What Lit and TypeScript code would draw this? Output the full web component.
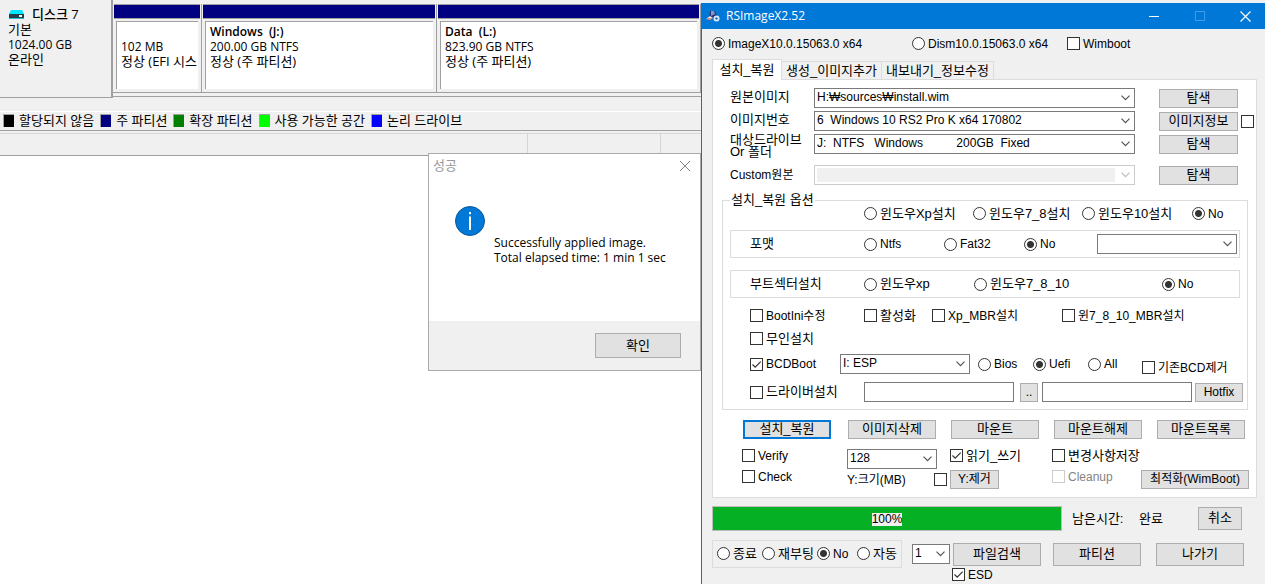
import { LitElement, html, css, nothing } from "lit";
import { customElement } from "lit/decorators.js";

const hasHangul = (text: string) => /[\uac00-\ud7a3]/.test(text);

const controls = css`
  * { box-sizing: border-box; }
  button, input, select { font: inherit; color: inherit; margin: 0; border-radius: 0; }
  .ko { font-size: 13px; }
  button {
    height: 19px;
    padding: 0 2px 1px;
    border: 1px solid #adadad;
    background: #e1e1e1;
    line-height: 14px;
    white-space: nowrap;
    overflow: hidden;
  }
  .tick { display: flex; align-items: center; gap: 3px; height: 13px; line-height: 16px; white-space: nowrap; }
  .tick.off { color: #838383; }
  input[type="radio"], input[type="checkbox"] {
    appearance: none;
    flex: none;
    width: 13px;
    height: 13px;
    border: 1px solid #333;
    background: #fff;
  }
  input[type="radio"] { border-radius: 50%; }
  input[type="radio"]:checked { background: radial-gradient(circle, #333 3px, #fff 4px); }
  input[type="checkbox"]:checked {
    background: #fff url("data:image/svg+xml,%3Csvg xmlns='http://www.w3.org/2000/svg' viewBox='0 0 11 11'%3E%3Cpath d='M1.5 5.5 4.2 8.2 9.7 2.7' fill='none' stroke='%23333' stroke-width='1.2'/%3E%3C/svg%3E");
  }
  input[type="checkbox"]:disabled { border-color: #ccc; }
  input[type="text"] { width: 150px; height: 20px; border: 1px solid #7a7a7a; background: #fff; padding: 0 2px; }
  select {
    appearance: none;
    width: 100%;
    height: 20px;
    padding: 0 18px 2px 2px;
    border: 1px solid #7a7a7a;
    background: #fff url("data:image/svg+xml,%3Csvg xmlns='http://www.w3.org/2000/svg' viewBox='0 0 9 6'%3E%3Cpath d='M.5 .7 4.5 4.7 8.5 .7' fill='none' stroke='%23555' stroke-width='1.2'/%3E%3C/svg%3E") no-repeat right 4px center / 9px 6px;
    white-space: pre;
  }
  select:disabled {
    opacity: 1;
    border-color: #ccc;
    box-shadow: inset 0 0 0 2px #fff;
    background:
      url("data:image/svg+xml,%3Csvg xmlns='http://www.w3.org/2000/svg' viewBox='0 0 9 6'%3E%3Cpath d='M.5 .7 4.5 4.7 8.5 .7' fill='none' stroke='%23bbb' stroke-width='1.2'/%3E%3C/svg%3E") no-repeat right 4px center / 9px 6px,
      linear-gradient(#fff, #fff) no-repeat right / 19px 100%,
      #f0f0f0;
  }
`;

@customElement("disk-view")
class DiskView extends LitElement {
  static styles = css`
    :host { display: block; min-width: 0; background: #fff; font: 12px/15px "Open Sans", "Noto Sans CJK KR", sans-serif; color: #000; }
    * { box-sizing: border-box; }
    .ko { font-size: 13px; }
    .disks { display: grid; grid-template-columns: 113px 1fr; height: 98px; background: #f0f0f0; }
    .disk { padding: 7px 8px; border-right: 2px solid #a0a0a0; border-bottom: 1px solid #a0a0a0; }
    .disk div, .part div { height: 15px; white-space: pre; }
    .disk .name { display: flex; align-items: center; gap: 8px; font-weight: 500; }
    .disk svg { width: 15px; height: 9px; margin-left: 1px; }
    .disks .parts { display: grid; grid-template-columns: 89px 235px 1fr; margin-top: 4px; height: 93px; border-bottom: 1px solid #a0a0a0; }
    .parts .part { display: flex; flex-direction: column; height: 89px; border-right: 1px solid #a0a0a0; border-bottom: 1px solid #a0a0a0; }
    .band { flex: none; height: 15px; margin: 0 1px; background: #000080; border: solid #a0a0a0; border-width: 1px 0; }
    .cell { flex: 1; margin: 2px 3px 3px; padding: 2px 4px; background: #fff; border: solid #a0a0a0; border-width: 1px 0 0 1px; overflow: hidden; }
    .part .title { font-weight: 600; }
    .legend { display: flex; align-items: center; gap: 6px; height: 20px; margin-top: 13px; padding: 0 3px 1px; border-top: 1px solid #fff; border-bottom: 1px solid #a0a0a0; }
    .key { display: flex; align-items: center; gap: 5px; white-space: nowrap; }
    .swatch { width: 11px; height: 13px; border: solid #a0a0a0; border-width: 1px 0 0 1px; }
    .lower { background: #f0f0f0; overflow: hidden; }
    .head { display: grid; grid-template-columns: 1fr 133px 40px; height: 23px; margin-top: 2px; border-top: 1px solid #d5d5d5; border-bottom: 1px solid #a0a0a0; }
    .head span { border-right: 1px solid #d5d5d5; }
    .head span:last-child { border: 0; }
  `;

  private parts = [
    ["", "102 MB", "정상 (EFI 시스"],
    ["Windows  (J:)", "200.00 GB NTFS", "정상 (주 파티션)"],
    ["Data  (L:)", "823.90 GB NTFS", "정상 (주 파티션)"],
  ];
  private keys = [
    ["#000000", "할당되지 않음"],
    ["#000080", "주 파티션"],
    ["#008000", "확장 파티션"],
    ["#00ff00", "사용 가능한 공간"],
    ["#0000ff", "논리 드라이브"],
  ];

  render() {
    return html`
      <section class="disks">
        <div class="disk">
          <div class="name ko">
            <svg viewBox="0 0 15 9"><path d="M2 0h11l2 4H0z" fill="#00e5ff" /><path d="M0 4h15v4H0z" fill="#263c49" /><path d="M0 8h15v1H0z" fill="#28b8cc" /><path d="M10 5h3v2h-3z" fill="#d8ffff" /></svg>
            <span>디스크 7</span>
          </div>
          <div class="ko">기본</div><div>1024.00 GB</div><div class="ko">온라인</div>
        </div>
        <div class="parts">
          ${this.parts.map(([title, size, state]) => html`
            <div class="part"><div class="band"></div>
              <div class="cell"><div class="title">${title}</div><div>${size}</div><div class="ko">${state}</div></div>
            </div>`)}
        </div>
      </section>
      <section class="lower">
        <div class="legend ko">
          ${this.keys.map(([color, name]) => html`<span class="key"><i class="swatch" style="background:${color}"></i>${name}</span>`)}
        </div>
        <div class="head"><span></span><span></span><span></span></div>
      </section>`;
  }
}

@customElement("message-dialog")
class MessageDialog extends LitElement {
  static styles = [controls, css`
    :host { display: flex; flex-direction: column; box-sizing: border-box; border: 1px solid #aaa; background: #fff; font: 12px/15px "Open Sans", "Noto Sans CJK KR", sans-serif; }
    header { display: flex; justify-content: space-between; align-items: center; height: 23px; padding: 0 9px 0 4px; color: #999; }
    header button { display: flex; align-items: center; padding: 0; border: 0; background: none; }
    header svg { width: 12px; height: 12px; }
    .body { flex: 1; display: flex; gap: 9px; padding: 29px 26px; }
    .info { width: 30px; height: 30px; flex: none; }
    p { margin: 29px 0 0; white-space: nowrap; }
    footer { display: flex; justify-content: flex-end; padding: 12px 19px; background: #f0f0f0; }
    footer button { width: 86px; height: 25px; }
  `];

  render() {
    return html`
      <header><span class="ko">성공</span>
        <button aria-label="닫기"><svg viewBox="0 0 12 12"><path d="M1 1l10 10M11 1 1 11" stroke="#888" fill="none" /></svg></button>
      </header>
      <div class="body">
        <svg class="info" viewBox="0 0 30 30"><circle cx="15" cy="15" r="14.5" fill="#0078d7" stroke="#0a5898" /><path d="M15 10.5v13.5M15 6v2.2" stroke="#fff" stroke-width="2" /></svg>
        <p>Successfully applied image.<br />Total elapsed time: 1 min 1 sec</p>
      </div>
      <footer><button class="ko">확인</button></footer>`;
  }
}

@customElement("imagex-window")
class ImagexWindow extends LitElement {
  static styles = [controls, css`
    :host { display: block; border-left: 1px solid #0078d7; background: #f0f0f0; font: 12px/16px "Liberation Sans", "Noto Sans CJK KR", sans-serif; color: #000; }
    .titlebar { display: flex; align-items: center; height: 26px; padding: 0 13px 0 4px; background: #0078d7; color: #fff; font-family: "Open Sans", sans-serif; }
    .titlebar .logo { width: 14px; height: 12px; margin-right: 6px; }
    .titlebar .name { flex: 1; }
    .titlebar button { display: flex; align-items: center; justify-content: center; width: 46px; padding: 0; border: 0; background: none; }
    .titlebar button:last-child { width: 13px; margin-left: 16px; }
    .titlebar button svg { width: 11px; height: 11px; }
    .body { padding: 8px 8px 0 10px; }
    .row { display: grid; align-items: center; }
    .engines { grid-template-columns: 200px 155px auto; height: 13px; }
    .tabs { display: flex; align-items: flex-end; margin-top: 9px; }
    .tabs button { height: 18px; padding: 0 2px; border: 1px solid #dcdcdc; border-bottom: 0; border-left: 0; background: #f0f0f0; width: 100px; }
    .tabs button.wide { width: 112px; }
    .tabs button.on { width: 70px; height: 21px; margin-bottom: -1px; border-left: 1px solid #dcdcdc; background: #fff; position: relative; }
    .panel { background: #fff; border: 1px solid #dcdcdc; padding: 8px 0; }
    .sources { display: grid; grid-template-columns: 84px 321px 24px 79px 3px 13px; row-gap: 3px; padding-left: 17px; }
    .sources > label { grid-column: 1; line-height: 12px; white-space: nowrap; display: flex; align-items: center; height: 18px; }
    .sources > label.two { align-items: flex-start; }
    .sources > select { grid-column: 2; }
    .sources > button { grid-column: 4; align-self: end; }
    .sources > input { grid-column: 6; align-self: center; }
    .sources > .custom { margin-top: 8px; }
    .sources > label.custom { height: 20px; }
    fieldset { margin: 8px 8px 0 9px; padding: 0 7px 7px; border: 1px solid #dcdcdc; min-width: 0; }
    legend { height: 14px; line-height: 14px; padding: 0 1px; }
    .install { grid-template-columns: 109px 109px 110px auto; padding-left: 134px; }
    .box { border: 1px solid #dcdcdc; height: 28px; padding-left: 19px; white-space: nowrap; }
    .format { grid-template-columns: 114px 80px 80px 73px 140px; margin-top: 10px; }
    .sector { grid-template-columns: 114px 110px 188px auto; margin: 12px 0 11px; }
    .mbr { grid-template-columns: 114px 68px 130px auto; padding-left: 20px; }
    .silent { padding-left: 20px; margin: 10px 0 9px; }
    .bcd { grid-template-columns: 90px 130px 8px 55px 55px 54px auto; padding-left: 20px; }
    .bcd .tick:nth-of-type(2) { grid-column: 4; }
    .bcd .tick:last-of-type { align-self: end; }
    .driver { grid-template-columns: 114px 156px 22px 153px 48px; padding-left: 20px; margin-top: 8px; }
    .dots { width: 18px; }
    .actions { grid-template-columns: 90px repeat(4, 88px); column-gap: 15px; padding-left: 30px; margin: 10px 0; }
    .primary { width: 88px; border: 2px solid #0078d7; }
    .verify { grid-template-columns: 105px 90px 13px 102px auto; align-items: start; padding-left: 29px; }
    .check { grid-template-columns: 105px 87px 16px 49px 53px 89px 108px; align-items: start; padding-left: 29px; margin-top: 1px; white-space: nowrap; }
    .check label[for] { line-height: 20px; height: 19px; }
    .check .solo { grid-column: 3; align-self: center; }
    .check .y { grid-column: 4; }
    .check .cleanup { grid-column: 6; }
    .check .clean { grid-column: 7; }
    .status { grid-template-columns: 350px 10px 67px 59px 44px; margin-top: 8px; white-space: nowrap; }
    .progress { grid-column: 1; display: flex; align-items: center; justify-content: center; height: 25px; padding-top: 2px; background: #06b025; border: 1px solid #bcbcbc; }
    .progress span { background: #f0f0f0; line-height: 13px; }
    .status .left { grid-column: 3; }
    .tall { height: 23px; }
    .power { grid-template-columns: 190px 10px 38px 3px 88px 12px 88px 15px 88px; margin-top: 9px; }
    .after { grid-template-columns: 45px 55px 40px auto; height: 28px; padding: 0 0 1px 4px; border: 1px solid #dcdcdc; }
    .c3 { grid-column: 3; } .c5 { grid-column: 5; } .c7 { grid-column: 7; } .c9 { grid-column: 9; }
    .esd { padding-left: 240px; }
  `];

  private tick(kind: "radio" | "checkbox", text: string, opts: { group?: string; on?: boolean; off?: boolean; small?: boolean } = {}) {
    const cls = `tick ${hasHangul(text) && !opts.small ? "ko" : ""} ${opts.off ? "off" : ""}`;
    return html`<label class=${cls}><input type=${kind} name=${opts.group ?? nothing} ?checked=${opts.on} ?disabled=${opts.off} />${text}</label>`;
  }

  private radios(group: string, names: string[], chosen: number) {
    return names.map((name, i) => this.tick("radio", name, { group, on: i === chosen }));
  }

  render() {
    return html`
      <header class="titlebar">
        <svg class="logo" viewBox="0 0 14 12"><path d="M4 1h5l2 5-3 3-5-1z" fill="#263673" /><path d="M5 1h3l1 3-4 2z" fill="#8495cc" /><path d="M0 9l4-3 3 2-3 2z" fill="#f3e9e2" /><path d="M1 9h5" stroke="#b3463d" /><circle cx="10.5" cy="8.5" r="3" fill="#dcecff" /><circle cx="10.5" cy="8.5" r="1.2" fill="#286bb3" /></svg>
        <span class="name">RSImageX2.52</span>
        <button aria-label="최소화"><svg viewBox="0 0 11 11"><path d="M0 5.5h10" stroke="#fff" /></svg></button>
        <button aria-label="최대화" disabled><svg viewBox="0 0 11 11"><path d="M.5.5h9v9h-9z" stroke="#3f9be8" fill="none" /></svg></button>
        <button aria-label="닫기"><svg viewBox="0 0 11 11"><path d="M.5.5l10 10M10.5.5l-10 10" stroke="#fff" stroke-width="1.2" /></svg></button>
      </header>
      <main class="body">
        <div class="row engines">
          ${this.radios("engine", ["ImageX10.0.15063.0 x64", "Dism10.0.15063.0 x64"], 0)}
          ${this.tick("checkbox", "Wimboot")}
        </div>
        <nav class="tabs ko"><button class="on">설치_복원</button><button>생성_이미지추가</button><button class="wide">내보내기_정보수정</button></nav>
        <section class="panel">
          <div class="sources">
            <label class="ko" for="src">원본이미지</label>
            <select id="src"><option>H:₩sources₩install.wim</option></select>
            <button class="ko">탐색</button>
            <label class="ko" for="num">이미지번호</label>
            <select id="num"><option>6 &nbsp;Windows 10 RS2 Pro K x64 170802</option></select>
            <button class="ko">이미지정보</button><input type="checkbox" aria-label="이미지정보" />
            <label class="ko two" for="dst">대상드라이브<br />Or 폴더</label>
            <select id="dst"><option>J: &nbsp;NTFS &nbsp;&nbsp;Windows &nbsp;&nbsp;&nbsp;&nbsp;&nbsp;&nbsp;&nbsp;&nbsp;&nbsp;200GB &nbsp;Fixed</option></select>
            <button class="ko">탐색</button>
            <label class="custom" for="cus">Custom원본</label>
            <select class="custom" id="cus" disabled></select>
            <button class="ko custom">탐색</button>
          </div>
          <fieldset>
            <legend class="ko">설치_복원 옵션</legend>
            <div class="row install">${this.radios("install", ["윈도우Xp설치", "윈도우7_8설치", "윈도우10설치", "No"], 3)}</div>
            <div class="row box format"><span class="ko">포맷</span>${this.radios("format", ["Ntfs", "Fat32", "No"], 2)}<select aria-label="포맷"></select></div>
            <div class="row box sector"><span class="ko">부트섹터설치</span>${this.radios("sector", ["윈도우xp", "윈도우7_8_10", "No"], 2)}</div>
            <div class="row mbr">
              ${this.tick("checkbox", "BootIni수정", { small: true })}${this.tick("checkbox", "활성화")}
              ${this.tick("checkbox", "Xp_MBR설치", { small: true })}${this.tick("checkbox", "윈7_8_10_MBR설치", { small: true })}
            </div>
            <div class="row silent">${this.tick("checkbox", "무인설치")}</div>
            <div class="row bcd">
              ${this.tick("checkbox", "BCDBoot", { on: true })}
              <select aria-label="BCDBoot"><option>I: ESP</option></select>
              ${this.radios("firmware", ["Bios", "Uefi", "All"], 1)}
              ${this.tick("checkbox", "기존BCD제거", { small: true })}
            </div>
            <div class="row driver">
              ${this.tick("checkbox", "드라이버설치")}
              <input type="text" aria-label="드라이버설치" /><button class="dots">..</button>
              <input type="text" aria-label="Hotfix" /><button>Hotfix</button>
            </div>
          </fieldset>
          <div class="row actions ko">
            <button class="primary">설치_복원</button><button>이미지삭제</button><button>마운트</button><button>마운트해제</button><button>마운트목록</button>
          </div>
          <div class="row verify">
            ${this.tick("checkbox", "Verify")}
            <select id="size"><option>128</option></select><span></span>
            ${this.tick("checkbox", "읽기_쓰기", { on: true })}${this.tick("checkbox", "변경사항저장")}
          </div>
          <div class="row check">
            ${this.tick("checkbox", "Check")}
            <label for="size">Y:크기(MB)</label>
            <input class="solo" type="checkbox" aria-label="Y:제거" /><button class="y">Y:제거</button>
            <span class="cleanup">${this.tick("checkbox", "Cleanup", { off: true })}</span>
            <button class="clean">최적화(WimBoot)</button>
          </div>
        </section>
        <div class="row status">
          <div class="progress" role="progressbar" aria-valuenow="100"><span>100%</span></div>
          <span class="left ko">남은시간:</span><span class="ko">완료</span><button class="tall ko">취소</button>
        </div>
        <div class="row power">
          <div class="row after">${this.radios("after", ["종료", "재부팅", "No", "자동"], 2)}</div>
          <select class="c3" aria-label="횟수"><option>1</option></select>
          <button class="tall ko c5">파일검색</button><button class="tall ko c7">파티션</button><button class="tall ko c9">나가기</button>
        </div>
        <div class="esd">${this.tick("checkbox", "ESD", { on: true })}</div>
      </main>`;
  }
}

@customElement("app-root")
class AppRoot extends LitElement {
  static styles = css`
    :host { display: block; background: #fff; }
    .desktop { position: relative; display: grid; grid-template-columns: 1fr 564px; min-height: 100vh; background: #f0f0f0; }
    imagex-window { margin-top: 3px; min-height: 0; }
    .dialog { position: absolute; right: 564px; top: 153px; width: 273px; height: 218px; }
  `;

  render() {
    return html`<div class="desktop">
      <disk-view></disk-view>
      <imagex-window></imagex-window>
      <message-dialog class="dialog"></message-dialog>
    </div>`;
  }
}
